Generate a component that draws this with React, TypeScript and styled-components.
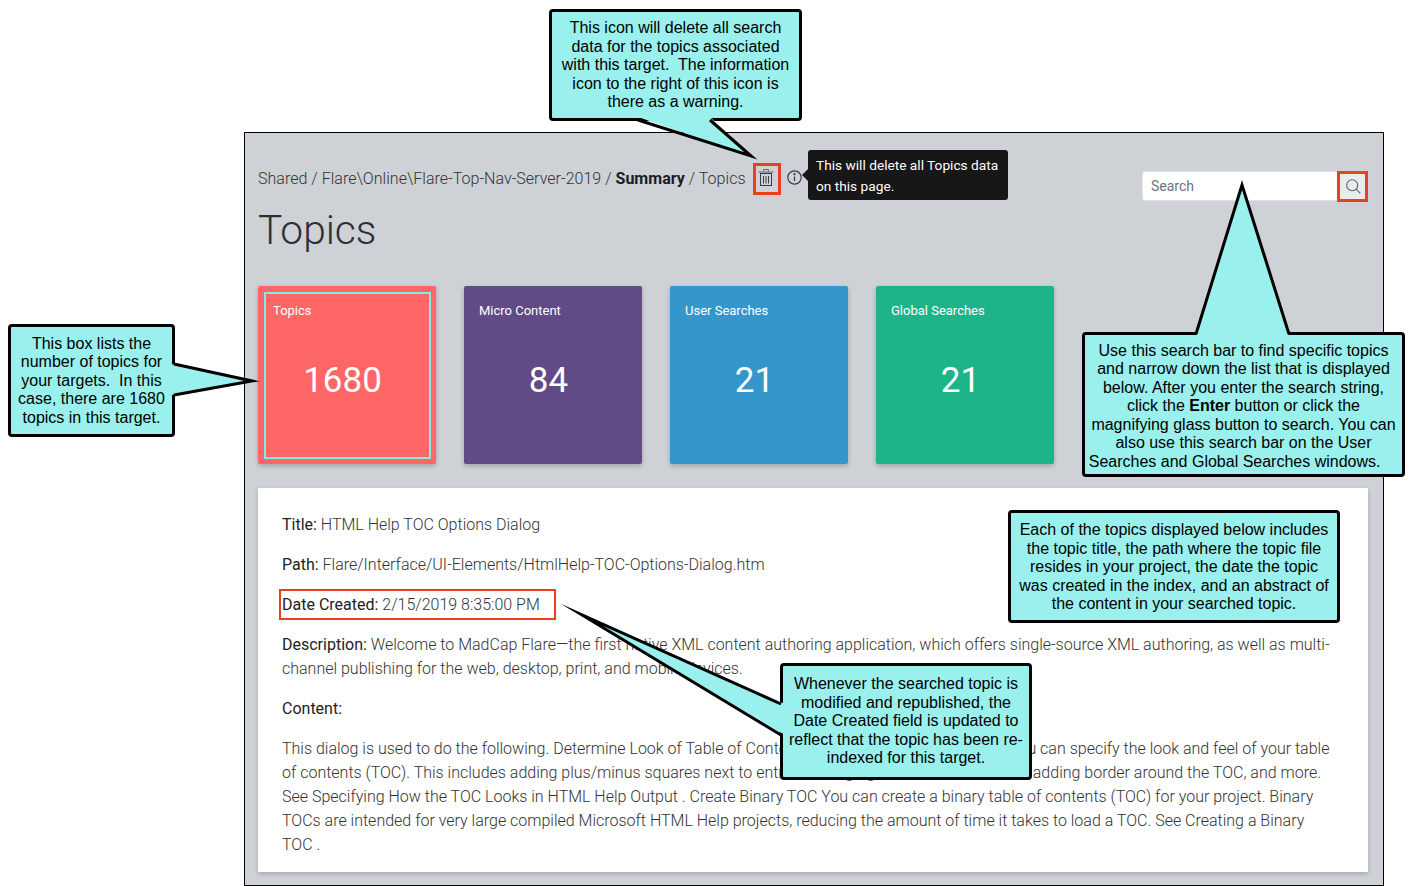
import React from "react";
import styled, { createGlobalStyle } from "styled-components";

const Global = createGlobalStyle`
  html, body { margin: 0; padding: 0; background: #fff; }
  body { font-family: Roboto, "Liberation Sans", sans-serif; }
  * { box-sizing: border-box; }
`;

const Page = styled.div`
  position: relative;
  width: 1413px;
  height: 886px;
  overflow: hidden;
  background: #fff;
  padding: 132px 0 0 244px;
`;

const Panel = styled.main`
  width: 1140px;
  height: 754px;
  background: #ced1d5;
  border: 1px solid #000;
  padding: 0 15px 0 13px;
`;

const Header = styled.header`
  display: flex;
  justify-content: space-between;
  align-items: flex-start;
  height: 153px;
`;

const HeadLeft = styled.div`
  display: flex;
  flex-direction: column;
`;

const CrumbRow = styled.div`
  display: flex;
  align-items: center;
  height: 30px;
  margin-top: 29px;
`;

const Crumbs = styled.nav`
  font-size: 16px;
  font-weight: 300;
  color: #333;
  white-space: nowrap;
  margin-top: 2px;
  letter-spacing: 0.03px;
  b { font-weight: 700; color: #1c1c28; }
`;

const IconButton = styled.span<{ $ml: number }>`
  display: inline-flex;
  margin-left: ${p => p.$ml}px;
  color: #3a3a4a;
`;

const TitleText = styled.h1`
  margin: 14px 0 0;
  font-size: 40.7px;
  line-height: 48px;
  font-weight: 300;
  color: #2e2e36;
`;

const SearchBar = styled.div`
  display: flex;
  align-items: stretch;
  height: 30px;
  margin-top: 38px;
`;

const SearchInput = styled.div`
  width: 196px;
  background: #fff;
  border-radius: 3px 0 0 3px;
  border: 1px solid #e0e3e6;
  padding: 0 8px;
  font-size: 14px;
  line-height: 28px;
  color: #6c757d;
`;

const SearchButton = styled.div`
  width: 30px;
  background: #e9ecef;
  display: flex;
  align-items: center;
  justify-content: center;
  color: #5a6570;
`;

const Cards = styled.section`
  display: flex;
  gap: 28px;
`;

const Card = styled.div<{ $bg: string; $active?: boolean }>`
  position: relative;
  width: 178px;
  height: 178px;
  background: ${p => p.$bg};
  border-radius: 2px;
  color: #fff;
  padding: 17px 15px 0;
  box-shadow: 0 2px 5px rgba(0, 0, 0, 0.22);
  ${p =>
    p.$active &&
    `&::after {
      content: "";
      box-sizing: border-box;
      position: absolute;
      left: 6px;
      top: 6px;
      width: 167px;
      height: 167px;
      border: 2px solid #80ece8;
    }`}
`;

const CardLabel = styled.div`
  font-size: 13px;
  line-height: 16px;
`;

const CardNumber = styled.div`
  margin-top: 38px;
  padding-right: 9px;
  text-align: center;
  font-size: 35px;
  line-height: 48px;
`;

const ResultCard = styled.article`
  margin-top: 24px;
  width: 1110px;
  height: 384px;
  background: #fff;
  box-shadow: 0 2px 5px rgba(0, 0, 0, 0.2);
  padding: 25px 24px 0;
  font-size: 16px;
  line-height: 24px;
  font-weight: 300;
  color: #333;
`;

const Para = styled.p`
  margin: 0 0 16px;
  b { font-weight: 400; color: #222; }
`;

const Tooltip = styled.div`
  position: absolute;
  left: 808px;
  top: 150px;
  width: 200px;
  height: 50px;
  background: #171717;
  border-radius: 3px;
  color: #fff;
  font-size: 13.7px;
  line-height: 21px;
  padding: 5px 8px;
  &::before {
    content: "";
    position: absolute;
    left: -6px;
    top: 19px;
    border-style: solid;
    border-width: 6px 6px 6px 0;
    border-color: transparent #171717 transparent transparent;
  }
`;

const Highlight = styled.div<{ $x: number; $y: number; $w: number; $h: number; $t: number }>`
  position: absolute;
  left: ${p => p.$x}px;
  top: ${p => p.$y}px;
  width: ${p => p.$w}px;
  height: ${p => p.$h}px;
  border: ${p => p.$t}px solid #e8411f;
`;

const Callout = styled.div<{ $x: number; $y: number; $w: number; $h: number; $drop?: number }>`
  position: absolute;
  left: ${p => p.$x}px;
  top: ${p => p.$y}px;
  width: ${p => p.$w}px;
  height: ${p => p.$h}px;
  padding-top: ${p => p.$drop ?? 0}px;
  background: #99f0ec;
  border: 3px solid #000;
  border-radius: 4px;
  display: flex;
  align-items: center;
  justify-content: center;
  text-align: center;
  font-family: "Liberation Sans", Arial, sans-serif;
  font-size: 16px;
  line-height: 18.5px;
  color: #000;
  white-space: pre;
  z-index: 2;
`;

const TailLayer = styled.svg`
  position: absolute;
  left: 0;
  top: 0;
  width: 1413px;
  height: 886px;
  z-index: 3;
  pointer-events: none;
`;

const tails = [
  { fill: "638,117 751,156 710,117", line: "638,120 751,156 710,120" },
  { fill: "1196,337 1242,185 1289,337", line: "1196,334 1242,185 1289,334" },
  { fill: "171,364 252,381 171,395", line: "174,364 252,381 174,395" },
  { fill: "785,704 582,615 785,735", line: "781,704 582,615 781,735" },
];

const cards = [
  { label: "Topics", value: "1680", bg: "#ff6666", active: true },
  { label: "Micro Content", value: "84", bg: "#614a85" },
  { label: "User Searches", value: "21", bg: "#3497cb" },
  { label: "Global Searches", value: "21", bg: "#1eb48a" },
];

export default function App() {
  return (
    <Page>
      <Global />
      <Panel>
        <Header>
          <HeadLeft>
            <CrumbRow>
              <Crumbs>
                Shared / Flare\Online\Flare-Top-Nav-Server-2019 / <b>Summary</b> / Topics
              </Crumbs>
              <IconButton $ml={12}>
                <svg width="16" height="17" viewBox="0 0 16 17" fill="none" stroke="currentColor" strokeWidth="1">
                  <path d="M0.5 3h15" stroke="#8a8d94" strokeWidth="1.6" />
                  <path d="M5.5 2.5V0.5h5v2" stroke="#6c6f78" />
                  <rect x="2.5" y="4.5" width="11" height="12" />
                  <path d="M5.5 7v7.5M8 7v7.5M10.5 7v7.5" />
                </svg>
              </IconButton>
              <IconButton $ml={13}>
                <svg width="15" height="15" viewBox="0 0 15 15" fill="none" stroke="currentColor" strokeWidth="1.2">
                  <circle cx="7.5" cy="7.5" r="6.7" />
                  <path d="M7.5 6.5v4.5" />
                  <circle cx="7.5" cy="4.2" r="0.5" fill="currentColor" />
                </svg>
              </IconButton>
            </CrumbRow>
            <TitleText>Topics</TitleText>
          </HeadLeft>
          <SearchBar>
            <SearchInput>Search</SearchInput>
            <SearchButton>
              <svg width="15" height="15" viewBox="0 0 15 15" fill="none" stroke="currentColor" strokeWidth="1.1">
                <circle cx="6.2" cy="6.2" r="5.5" />
                <path d="M10.2 10.2L14.3 14.3" />
              </svg>
            </SearchButton>
          </SearchBar>
        </Header>

        <Cards>
          {cards.map(c => (
            <Card key={c.label} $bg={c.bg} $active={c.active}>
              <CardLabel>{c.label}</CardLabel>
              <CardNumber>{c.value}</CardNumber>
            </Card>
          ))}
        </Cards>

        <ResultCard>
          <Para><b>Title:</b> HTML Help TOC Options Dialog</Para>
          <Para><b>Path:</b> Flare/Interface/UI-Elements/HtmlHelp-TOC-Options-Dialog.htm</Para>
          <Para><b>Date Created:</b> 2/15/2019 8:35:00 PM</Para>
          <Para>
            <b>Description:</b> Welcome to MadCap Flare—the first native XML content authoring application, which offers single-source XML authoring, as well as multi-channel publishing for the web, desktop, print, and mobile devices.
          </Para>
          <Para><b>Content:</b></Para>
          <Para>
            This dialog is used to do the following. Determine Look of Table of Contents in all the HTML Help Output You can specify the look and feel of your table of contents (TOC). This includes adding plus/minus squares next to entries, changing fonts and book icons, adding border around the TOC, and more. See Specifying How the TOC Looks in HTML Help Output . Create Binary TOC You can create a binary table of contents (TOC) for your project. Binary TOCs are intended for very large compiled Microsoft HTML Help projects, reducing the amount of time it takes to load a TOC. See Creating a Binary TOC&nbsp;.
          </Para>
        </ResultCard>
      </Panel>

      <Tooltip>This will delete all Topics data on this page.</Tooltip>

      <Highlight $x={753} $y={163} $w={28} $h={32} $t={3} />
      <Highlight $x={1337} $y={171} $w={31} $h={31} $t={3} />
      <Highlight $x={279} $y={589} $w={277} $h={31} $t={2} />

      <Callout $x={549} $y={9} $w={253} $h={112} $drop={1}>
        <div>
          This icon will delete all search<br />
          data for the topics associated<br />
          with this target.&nbsp; The information<br />
          icon to the right of this icon is<br />
          there as a warning.
        </div>
      </Callout>
      <Callout $x={8} $y={324} $w={167} $h={113} $drop={1}>
        <div>
          This box lists the<br />
          number of topics for<br />
          your targets.&nbsp; In this<br />
          case, there are 1680<br />
          topics in this target.
        </div>
      </Callout>
      <Callout $x={1082} $y={332} $w={323} $h={145} $drop={4}>
        <div>
          Use this search bar to find specific topics<br />
          and narrow down the list that is displayed<br />
          below. After you enter the search string,<br />
          click the <b>Enter</b> button or click the<br />
          magnifying glass button to search. You can<br />
          also use this search bar on the User<br />
          Searches and Global Searches windows.&nbsp;&nbsp;&nbsp;&nbsp;
        </div>
      </Callout>
      <Callout $x={1008} $y={510} $w={332} $h={113} $drop={2}>
        <div>
          Each of the topics displayed below includes<br />
          the topic title, the path where the topic file<br />
          resides in your project, the date the topic<br />
          was created in the index, and an abstract of<br />
          the content in your searched topic.
        </div>
      </Callout>
      <Callout $x={780} $y={663} $w={252} $h={117}>
        <div>
          Whenever the searched topic is<br />
          modified and republished, the<br />
          Date Created field is updated to<br />
          reflect that the topic has been re-<br />
          indexed for this target.
        </div>
      </Callout>

      <TailLayer viewBox="0 0 1413 886">
        {tails.map(t => (
          <g key={t.line}>
            <polygon points={t.fill} fill="#99f0ec" />
            <polyline points={t.line} fill="none" stroke="#000" strokeWidth="3" strokeMiterlimit="30" />
          </g>
        ))}
      </TailLayer>
    </Page>
  );
}
